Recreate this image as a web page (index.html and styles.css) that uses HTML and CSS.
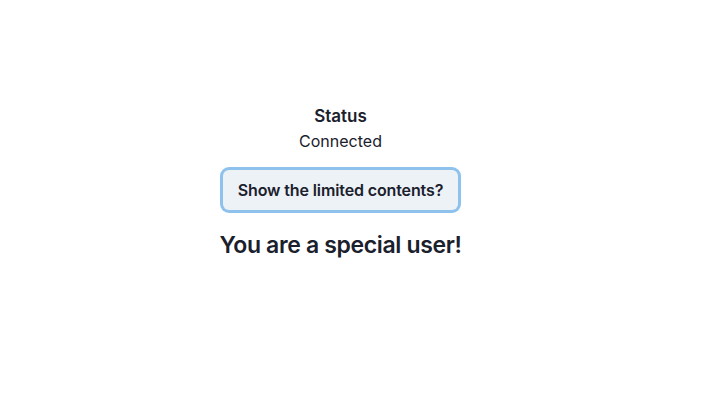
FILE: index.html
```html
<!DOCTYPE html>
<html>
<head>
<meta charset="utf-8">
<link rel="stylesheet" href="styles.css">
</head>
<body>
<main class="page">
  <section class="panel">
    <div class="status">
      <p class="status-label">Status</p>
      <p class="status-value">Connected</p>
    </div>
    <button class="toggle">Show the limited contents?</button>
    <h2 class="special">You are a special user!</h2>
  </section>
</main>
</body>
</html>
```
FILE: styles.css
```css
html, body {
  margin: 0;
  padding: 0;
  background: #ffffff;
  color: #1a202c;
  font-family: Inter, "Noto Sans", sans-serif;
}
.page {
  width: 707px;
  height: 400px;
  display: flex;
  justify-content: flex-start;
  padding-left: 220px;
  padding-top: 104px;
  box-sizing: border-box;
}
.panel {
  width: 241px;
  display: flex;
  flex-direction: column;
  align-items: center;
}
.status {
  display: flex;
  flex-direction: column;
  align-items: center;
}
.status-label {
  margin: 0;
  font-size: 17px;
  font-weight: 600;
  line-height: 24px;
}
.status-value {
  margin: 1px 0 0;
  font-size: 16px;
  line-height: 24px;
}
.toggle {
  margin-top: 17px;
  height: 40px;
  width: 235px;
  padding: 0;
  border: none;
  border-radius: 6px;
  background: #edf2f7;
  color: #1a202c;
  font-family: Inter, "Noto Sans", sans-serif;
  font-size: 16px;
  font-weight: 600;
  letter-spacing: -0.12px;
  white-space: nowrap;
  box-shadow: 0 0 0 3px rgba(66, 153, 225, 0.6);
}
.special {
  margin: 19px 0 0;
  font-size: 23px;
  font-weight: 600;
  line-height: 32px;
  letter-spacing: -0.35px;
  white-space: nowrap;
}
```
